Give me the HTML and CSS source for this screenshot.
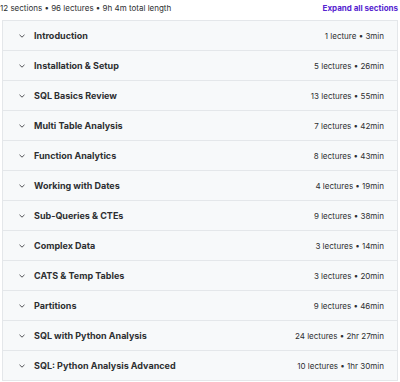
FILE: index.html
```html
<!DOCTYPE html>
<html>

<head>
    <title>Course content</title>
    <link rel="stylesheet" href="styles.css">
</head>

<body>
    <div class="summary">
        <span>12 sections • 96 lectures • 9h 4m total length</span>
        <button class="expand">Expand all sections</button>
    </div>
    <div class="sections">
        <div class="section">
            <div class="title"><span class="chevron"><svg width="6" height="4" viewBox="0 0 6 4"><path d="M0.5 0.8l2.5 2.4 2.5-2.4" fill="none" stroke="#3e4143" stroke-width="0.9"/></svg></span>Introduction</div>
            <div class="meta">1 lecture • 3min</div>
        </div>
        <div class="section">
            <div class="title"><span class="chevron"><svg width="6" height="4" viewBox="0 0 6 4"><path d="M0.5 0.8l2.5 2.4 2.5-2.4" fill="none" stroke="#3e4143" stroke-width="0.9"/></svg></span>Installation &amp; Setup</div>
            <div class="meta">5 lectures • 26min</div>
        </div>
        <div class="section">
            <div class="title"><span class="chevron"><svg width="6" height="4" viewBox="0 0 6 4"><path d="M0.5 0.8l2.5 2.4 2.5-2.4" fill="none" stroke="#3e4143" stroke-width="0.9"/></svg></span>SQL Basics Review</div>
            <div class="meta">13 lectures • 55min</div>
        </div>
        <div class="section">
            <div class="title"><span class="chevron"><svg width="6" height="4" viewBox="0 0 6 4"><path d="M0.5 0.8l2.5 2.4 2.5-2.4" fill="none" stroke="#3e4143" stroke-width="0.9"/></svg></span>Multi Table Analysis</div>
            <div class="meta">7 lectures • 42min</div>
        </div>
        <div class="section">
            <div class="title"><span class="chevron"><svg width="6" height="4" viewBox="0 0 6 4"><path d="M0.5 0.8l2.5 2.4 2.5-2.4" fill="none" stroke="#3e4143" stroke-width="0.9"/></svg></span>Function Analytics</div>
            <div class="meta">8 lectures • 43min</div>
        </div>
        <div class="section">
            <div class="title"><span class="chevron"><svg width="6" height="4" viewBox="0 0 6 4"><path d="M0.5 0.8l2.5 2.4 2.5-2.4" fill="none" stroke="#3e4143" stroke-width="0.9"/></svg></span>Working with Dates</div>
            <div class="meta">4 lectures • 19min</div>
        </div>
        <div class="section">
            <div class="title"><span class="chevron"><svg width="6" height="4" viewBox="0 0 6 4"><path d="M0.5 0.8l2.5 2.4 2.5-2.4" fill="none" stroke="#3e4143" stroke-width="0.9"/></svg></span>Sub-Queries &amp; CTEs</div>
            <div class="meta">9 lectures • 38min</div>
        </div>
        <div class="section">
            <div class="title"><span class="chevron"><svg width="6" height="4" viewBox="0 0 6 4"><path d="M0.5 0.8l2.5 2.4 2.5-2.4" fill="none" stroke="#3e4143" stroke-width="0.9"/></svg></span>Complex Data</div>
            <div class="meta">3 lectures • 14min</div>
        </div>
        <div class="section">
            <div class="title"><span class="chevron"><svg width="6" height="4" viewBox="0 0 6 4"><path d="M0.5 0.8l2.5 2.4 2.5-2.4" fill="none" stroke="#3e4143" stroke-width="0.9"/></svg></span>CATS &amp; Temp Tables</div>
            <div class="meta">3 lectures • 20min</div>
        </div>
        <div class="section">
            <div class="title"><span class="chevron"><svg width="6" height="4" viewBox="0 0 6 4"><path d="M0.5 0.8l2.5 2.4 2.5-2.4" fill="none" stroke="#3e4143" stroke-width="0.9"/></svg></span>Partitions</div>
            <div class="meta">9 lectures • 46min</div>
        </div>
        <div class="section">
            <div class="title"><span class="chevron"><svg width="6" height="4" viewBox="0 0 6 4"><path d="M0.5 0.8l2.5 2.4 2.5-2.4" fill="none" stroke="#3e4143" stroke-width="0.9"/></svg></span>SQL with Python Analysis</div>
            <div class="meta">24 lectures • 2hr 27min</div>
        </div>
        <div class="section">
            <div class="title"><span class="chevron"><svg width="6" height="4" viewBox="0 0 6 4"><path d="M0.5 0.8l2.5 2.4 2.5-2.4" fill="none" stroke="#3e4143" stroke-width="0.9"/></svg></span>SQL: Python Analysis Advanced</div>
            <div class="meta">10 lectures • 1hr 30min</div>
        </div>
    </div>
</body>

</html>
```

FILE: styles.css
```css
body {
    margin: 0;
    font-family: 'Inter', sans-serif;
    color: #2d2f31;
    background: #ffffff;
}

.summary {
    height: 16px;
    margin-bottom: 4px;
    display: flex;
    justify-content: space-between;
    align-items: center;
    padding-right: 2px;
    font-size: 8px;
    color: #2d2f31;
}

.expand {
    border: none;
    background: none;
    padding: 0;
    font-family: inherit;
    font-size: 8px;
    font-weight: 700;
    color: #5624d0;
    cursor: pointer;
}

.sections {
    margin: 0 2px;
    border: 1px solid #e4e7ea;
}

.section {
    height: 29px;
    display: flex;
    justify-content: space-between;
    align-items: center;
    padding: 0 13px 0 16px;
    background-color: #f7f9fa;
    border-bottom: 1px solid #e4e7ea;
}

.section:last-child {
    border-bottom: none;
}

.title {
    display: flex;
    align-items: center;
    font-size: 9px;
    font-weight: 700;
}

.chevron {
    display: flex;
    width: 15px;
}

.meta {
    font-size: 8px;
}
```
